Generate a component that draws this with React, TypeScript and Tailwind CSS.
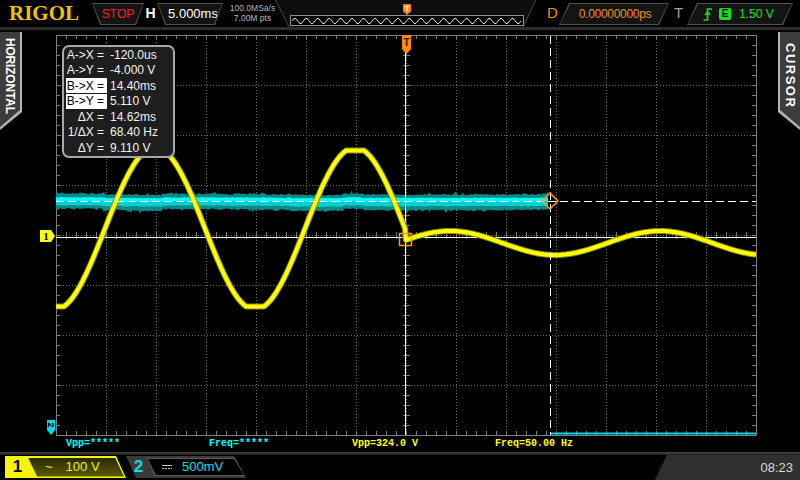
import React from 'react';

// deterministic noise so the trace looks the same on every render
function rng(seed: number) {
  let s = seed;
  return () => {
    s = (s * 1664525 + 1013904223) % 4294967296;
    return s / 4294967296;
  };
}

const fmt = (p: [number, number]) => `${p[0].toFixed(1)},${p[1].toFixed(1)}`;
const band = (a: [number, number][], b: [number, number][]) =>
  'M' + a.map(fmt).join(' L') + ' L' + b.slice().reverse().map(fmt).join(' L') + ' Z';

function buildCh1() {
  const pts: string[] = [];
  for (let x = 56; x <= 756; x++) {
    let y: number;
    if (x <= 405) {
      const c = Math.max(-1, Math.min(1, 1.04 * Math.cos((2 * Math.PI * (x - 355)) / 200)));
      y = 228.5 - 78 * c;
    } else {
      y = 243 - 12 * Math.cos((2 * Math.PI * (x - 450)) / 210);
    }
    pts.push(`${x},${y.toFixed(1)}`);
  }
  return 'M' + pts.join(' L');
}

function buildCh2() {
  const r = rng(12345);
  const up: [number, number][] = [];
  const lo: [number, number][] = [];
  const cu: [number, number][] = [];
  const cm: [number, number][] = [];
  const cl: [number, number][] = [];
  let d = 0;
  for (let x = 56; x <= 549; x += 1.5) {
    if (r() < 0.04) d = (r() - 0.5) * 2.4;
    const su = r() < 0.12 ? r() * 3 : 0;
    const sl = r() < 0.12 ? r() * 3 : 0;
    up.push([x, 195 + d * 0.6 - r() * 1.5 - su]);
    lo.push([x, 209 + d + r() * 1.5 + sl]);
    cu.push([x, 197.5 + d * 0.4 + r() * 0.7]);
    cm.push([x, 201.5 + d * 0.5]);
    cl.push([x, 205.5 + d * 0.6 + r() * 0.8]);
  }
  return { outer: band(up, lo), core: band(cu, cl), hi: band(cu, cm) };
}

function Scope() {
  const ch1 = buildCh1();
  const ch2 = buildCh2();
  const dots: React.ReactNode[] = [];
  const ticks: React.ReactNode[] = [];

  for (let i = 1; i < 14; i++) {
    const x = 56.5 + i * 50;
    dots.push(<line key={'v' + i} x1={x} y1={36} x2={x} y2={435} stroke="#6e6e6e" strokeDasharray="1 2" />);
  }
  for (let j = 1; j < 8; j++) {
    const y = 35.5 + j * 50;
    dots.push(<line key={'h' + j} x1={57} y1={y} x2={756} y2={y} stroke="#6e6e6e" strokeDasharray="1 2" />);
  }
  for (let y = 45; y < 435; y += 10) {
    ticks.push(<line key={'l' + y} x1={56} y1={y + 0.5} x2={60} y2={y + 0.5} />);
    ticks.push(<line key={'r' + y} x1={752} y1={y + 0.5} x2={756} y2={y + 0.5} />);
    ticks.push(<line key={'c' + y} x1={403} y1={y + 0.5} x2={410} y2={y + 0.5} />);
  }
  for (let x = 66; x < 756; x += 10) {
    ticks.push(<line key={'t' + x} x1={x + 0.5} y1={35} x2={x + 0.5} y2={39} />);
    ticks.push(<line key={'b' + x} x1={x + 0.5} y1={431} x2={x + 0.5} y2={435} />);
    ticks.push(<line key={'m' + x} x1={x + 0.5} y1={232} x2={x + 0.5} y2={239} />);
  }

  return (
    <svg width={756} height={406} viewBox="22 30 756 406" className="block shrink-0">
      <g shapeRendering="crispEdges">
        {dots}
        <g stroke="#7a7a7a">{ticks}</g>
        <rect x={56.5} y={35.5} width={700} height={400} fill="none" stroke="#7c7c7c" />
      </g>

      {/* CH2 noisy trace */}
      <path d={ch2.outer} fill="#078a8a" />
      <path d={ch2.core} fill="#00cfd2" />
      <path d={ch2.hi} fill="#00ffff" />
      <line x1={551} y1={433.5} x2={756} y2={433.5} stroke="#00dce6" strokeWidth={2} />

      {/* cursor A */}
      <g shapeRendering="crispEdges" stroke="#ffffff">
        <line x1={405.5} y1={36} x2={405.5} y2={435} />
        <line x1={56} y1={237.5} x2={756} y2={237.5} />
      </g>

      {/* CH1 trace */}
      <path d={ch1} fill="none" stroke="#8c8c00" strokeWidth={6} strokeLinejoin="round" />
      <path d={ch1} fill="none" stroke="#ffff00" strokeWidth={4} strokeLinejoin="round" />

      {/* cursor B */}
      <g shapeRendering="crispEdges" stroke="#ffffff" strokeDasharray="8 4">
        <line x1={550.5} y1={36} x2={550.5} y2={435} />
        <line x1={56} y1={201.5} x2={756} y2={201.5} />
      </g>

      <rect x={399.5} y={233.5} width={12} height={12} fill="none" stroke="#ff9c00" strokeWidth={1.5} />
      <polygon points="550,193 558,201 550,209 542,201" fill="none" stroke="#ff9c00" strokeWidth={1.5} />

      {/* trigger position marker */}
      <polygon points="402,35 411,35 411,49 406.5,54 402,49" fill="#ff8c00" />
      <text x={406.5} y={46} textAnchor="middle" fontSize={10} fontWeight={700} fill="#2a1400" fontFamily="Liberation Sans, sans-serif">T</text>

      {/* channel markers */}
      <polygon points="40,230 51,230 55,236 51,242 40,242" fill="#ffff00" />
      <text x={46} y={240} textAnchor="middle" fontSize={11} fontWeight={700} fill="#000" fontFamily="Liberation Serif, serif">1</text>
      <polygon points="47,420 55,420 55,430 51,435 47,430" fill="#00d8f0" />
      <text x={51} y={428.5} textAnchor="middle" fontSize={9} fontWeight={700} fill="#000" fontFamily="Liberation Sans, sans-serif" transform="rotate(90 51 425)">2</text>
    </svg>
  );
}

function MemoryBar() {
  const pts: string[] = [];
  for (let i = 0; i <= 229; i++) {
    const y = 21 - 2.6 * Math.sin((2 * Math.PI * i * 20) / 229);
    pts.push(`${(17 + i).toFixed(1)},${y.toFixed(1)}`);
  }
  return (
    <svg width={265} height={27} viewBox="0 0 265 27" className="block shrink-0">
      <polygon points="0,0 261,0 248,27 14,27" fill="#0e0e0e" />
      <line x1={0.5} y1={0} x2={14} y2={27} stroke="#4a4a4a" />
      <line x1={261} y1={0} x2={248} y2={27} stroke="#4a4a4a" />
      <rect x={15.5} y={15.5} width={233} height={10} fill="#000" stroke="#8e8e8e" shapeRendering="crispEdges" />
      <path d={'M' + pts.join(' L')} fill="none" stroke="#f2f2f2" strokeWidth={1} />
      <rect x={128} y={4} width={8} height={8} rx={1} fill="#ff8c00" />
      <polygon points="129,12 135,12 132,15" fill="#ff8c00" />
      <text x={132} y={11} textAnchor="middle" fontSize={7.5} fontWeight={700} fill="#fff" fontFamily="Liberation Sans, sans-serif">T</text>
    </svg>
  );
}

function EdgeIcon() {
  return (
    <svg width={10} height={13} viewBox="0 0 10 13" fill="none" stroke="#18e018" strokeWidth={1.6}>
      <path d="M0.5 12 H4.5 V1 H9" />
      <path d="M2 7 L4.5 4 L7 7" />
    </svg>
  );
}

function DcIcon() {
  return (
    <svg width={10} height={6} viewBox="0 0 10 6" stroke="#c8c8c8" strokeWidth={1}>
      <line x1={0} y1={1.5} x2={10} y2={1.5} />
      <line x1={0} y1={4.5} x2={10} y2={4.5} strokeDasharray="2 1" />
    </svg>
  );
}

function TopBar() {
  return (
    <div className="h-[30px] shrink-0 flex items-start border-b-[3px] border-[#2d2d2d]">
      <div className="w-[92px] h-[27px] flex items-center pl-[9px] font-['Liberation_Serif',serif] font-bold text-[21px] leading-none text-[#f2c200]">
        RIGOL
      </div>
      <div className="mt-[3px] w-[52px] h-[22px] p-px bg-[#505050] [clip-path:polygon(0_0,100%_0,calc(100%-8px)_100%,8px_100%)]">
        <div className="h-full flex items-center justify-center text-[12px] text-[#ff1e1e] bg-[#141414] [clip-path:polygon(0_0,100%_0,calc(100%-8px)_100%,8px_100%)]">
          STOP
        </div>
      </div>
      <div className="w-[13px] h-[27px] flex items-center justify-center text-[14px] font-bold text-white">H</div>
      <div className="mt-[3px] w-[66px] h-[22px] p-px bg-[#505050] [clip-path:polygon(0_0,100%_0,calc(100%-8px)_100%,8px_100%)]">
        <div className="h-full flex items-center justify-center pl-[6px] text-[13px] text-white bg-[#141414] [clip-path:polygon(0_0,100%_0,calc(100%-8px)_100%,8px_100%)]">
          5.000ms
        </div>
      </div>
      <div className="ml-[7px] w-[45px] pt-[3px] flex flex-col items-center text-[8.5px] leading-[10px] text-[#b8b8b8]">
        <span>100.0MSa/s</span>
        <span>7.00M pts</span>
      </div>
      <MemoryBar />
      <div className="w-[19px] h-[27px] flex items-center pl-[7px] text-[15px] text-[#f08c00]">D</div>
      <div className="mt-[3px] w-[110px] h-[22px] p-px bg-[#505050] [clip-path:polygon(10px_0,100%_0,calc(100%-10px)_100%,0_100%)]">
        <div className="h-full flex items-center justify-center pl-[2px] text-[12px] tracking-[-0.3px] text-[#f08c1e] bg-[#141414] [clip-path:polygon(10px_0,100%_0,calc(100%-10px)_100%,0_100%)]">
          0.00000000ps
        </div>
      </div>
      <div className="w-[18px] h-[27px] flex items-center pl-[5px] text-[15px] text-[#a0a0a0]">T</div>
      <div className="mt-[3px] w-[106px] h-[22px] p-px bg-[#505050] [clip-path:polygon(10px_0,100%_0,calc(100%-10px)_100%,0_100%)]">
        <div className="h-full flex items-center pl-[15px] bg-[#141414] [clip-path:polygon(10px_0,100%_0,calc(100%-10px)_100%,0_100%)]">
          <EdgeIcon />
          <div className="ml-[6px] w-[12px] h-[12px] rounded-[2px] bg-[#18e018] flex items-center justify-center text-[10px] font-bold leading-none text-black">
            E
          </div>
          <span className="ml-[8px] text-[12px] text-[#18e018]">1.50 V</span>
        </div>
      </div>
    </div>
  );
}

function LeftTab() {
  return (
    <div className="mt-[2px] w-[22px] h-[98px] bg-[#b4b4b4] [clip-path:polygon(0_0,100%_0,100%_80px,0_98px)]">
      <div className="mt-px w-[20px] h-[95px] bg-[#3c3c3c] [clip-path:polygon(0_0,100%_0,100%_78px,0_95px)] flex justify-center pt-[6px]">
        <span className="[writing-mode:vertical-rl] text-[12px] font-bold leading-none tracking-[-0.2px] text-white">HORIZONTAL</span>
      </div>
    </div>
  );
}

function RightTab() {
  return (
    <div className="mt-[2px] w-[22px] h-[98px] bg-[#b4b4b4] [clip-path:polygon(0_0,100%_0,100%_98px,0_80px)]">
      <div className="mt-px ml-[2px] w-[20px] h-[95px] bg-[#3c3c3c] [clip-path:polygon(0_0,100%_0,100%_95px,0_78px)] flex justify-center pt-[11px]">
        <span className="[writing-mode:vertical-rl] text-[13px] font-bold leading-none tracking-[1.5px] text-white">CURSOR</span>
      </div>
    </div>
  );
}

const cursorRows: { label: string; value: string; hl?: boolean }[] = [
  { label: 'A->X =', value: '-120.0us' },
  { label: 'A->Y =', value: '-4.000 V' },
  { label: 'B->X =', value: '14.40ms', hl: true },
  { label: 'B->Y =', value: '5.110 V', hl: true },
  { label: 'ΔX =', value: '14.62ms' },
  { label: '1/ΔX =', value: '68.40 Hz' },
  { label: 'ΔY =', value: '9.110 V' },
];

function CursorBox() {
  return (
    <div className="absolute left-[62px] top-[15px] w-[113px] h-[113px] border-2 border-[#a8a8a8] rounded-[7px] bg-[#1e1e1e] text-[12px] text-[#f2f2f2]">
      {cursorRows.map((r) => (
        <div key={r.label} className="h-[15.5px] flex items-center">
          <span
            className={`ml-[2px] w-[41px] h-[15px] flex items-center justify-end pr-[3px] ${
              r.hl ? 'bg-white text-black' : ''
            }`}
          >
            {r.label}
          </span>
          <span className="ml-[3px]">{r.value}</span>
        </div>
      ))}
    </div>
  );
}

function Measurements() {
  return (
    <div className="h-[16px] shrink-0 flex items-center pl-[66px] font-['Liberation_Mono',monospace] font-bold text-[10px] leading-none">
      <span className="w-[143px] text-[#00ffff]">Vpp=*****</span>
      <span className="w-[143px] text-[#00ffff]">Freq=*****</span>
      <span className="w-[143px] text-[#ffff00]">Vpp=324.0 V</span>
      <span className="w-[143px] text-[#ffff00]">Freq=50.00 Hz</span>
    </div>
  );
}

function BottomBar() {
  return (
    <div className="h-[25px] shrink-0 flex items-start">
      <div className="ml-[5px] mt-px w-[121px] h-[22px] flex bg-[#f5f500] [clip-path:polygon(0_0,calc(100%-10px)_0,100%_100%,0_100%)]">
        <div className="w-[23px] flex items-center justify-center pl-[2px] text-[17px] font-bold text-black">1</div>
        <div className="flex-1 my-[1.5px] mr-[2px] flex items-center bg-gradient-to-b from-[#2a2a00] to-[#5c5c00] text-[13px] text-[#f0f000] [clip-path:polygon(0_0,calc(100%-9px)_0,100%_100%,9px_100%)]">
          <span className="ml-[17px]">~</span>
          <span className="ml-[13px]">100 V</span>
        </div>
      </div>
      <div className="mt-px w-[120px] h-[22px] flex bg-[#3a3a3a] [clip-path:polygon(0_0,calc(100%-12px)_0,100%_100%,10px_100%)]">
        <div className="w-[21px] flex items-center justify-center pl-[4px] text-[17px] font-bold text-[#00e0f0]">2</div>
        <div className="flex-1 my-[2px] mr-px p-px bg-[#5a5a5a] [clip-path:polygon(0_0,calc(100%-10px)_0,100%_100%,8px_100%)]">
          <div className="h-full flex items-center bg-black [clip-path:polygon(0_0,calc(100%-10px)_0,100%_100%,8px_100%)]">
            <span className="ml-[14px]">
              <DcIcon />
            </span>
            <span className="ml-[10px] text-[13px] text-[#00e0f0]">500mV</span>
          </div>
        </div>
      </div>
      <div className="ml-auto w-[145px] h-[25px] flex items-center justify-end pr-[7px] bg-[#303030] text-[13px] text-[#d8d8d8] [clip-path:polygon(12px_0,100%_0,100%_100%,0_100%)]">
        08:23
      </div>
    </div>
  );
}

export default function App() {
  return (
    <div className="w-[800px] h-[480px] bg-black overflow-hidden flex flex-col font-['Liberation_Sans',sans-serif]">
      <TopBar />
      <div className="relative flex h-[406px] shrink-0">
        <div className="w-[22px] shrink-0">
          <LeftTab />
        </div>
        <Scope />
        <div className="w-[22px] shrink-0">
          <RightTab />
        </div>
        <CursorBox />
      </div>
      <Measurements />
      <div className="h-[3px] shrink-0 bg-gradient-to-b from-[#4a4a4a] to-[#1e1e1e]" />
      <BottomBar />
    </div>
  );
}
